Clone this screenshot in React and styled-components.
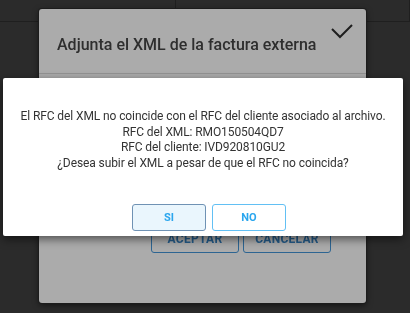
import React from 'react'
import styled, { createGlobalStyle } from 'styled-components'

const GlobalStyle = createGlobalStyle`
  html, body {
    margin: 0;
    padding: 0;
    background: #2b2b2b;
    font-family: Roboto, "Noto Sans", Arial, sans-serif;
  }
`

const Screen = styled.div`
  width: 410px;
  height: 313px;
  background: #2b2b2b;
  overflow: hidden;
`

const HeaderRow = styled.div`
  display: flex;
  height: 21px;
  border-bottom: 1px solid #1f1f1f;
`

const HeaderCell = styled.div`
  width: ${p => p.w}px;
  border-right: 1px solid #1f1f1f;
`

const Panel = styled.div`
  position: fixed;
  left: 39px;
  top: 9px;
  width: 327px;
  height: 294px;
  background: #ababab;
  border-radius: 3px;
  box-shadow: 0 0 0 1px #1c1c1c, 0 2px 6px rgba(0, 0, 0, 0.6);
  display: flex;
  flex-direction: column;
`

const PanelHeader = styled.div`
  height: 64px;
  border-bottom: 1px solid #939393;
  display: flex;
  align-items: flex-end;
  justify-content: space-between;
  padding: 0 12px 0 18px;
  position: relative;
`

const Title = styled.h2`
  margin: 0 0 19px;
  font-size: 16px;
  font-weight: 500;
  color: #2e2e2e;
`

const CheckBtn = styled.div`
  position: absolute;
  right: 12px;
  top: 14px;
  width: 24px;
  height: 20px;
`

const PanelActions = styled.div`
  display: flex;
  gap: 4px;
  margin: 151px 35px 0 112px;
`

const OutlineBtn = styled.button`
  width: 88px;
  height: 28px;
  border: 1px solid #2d6592;
  border-radius: 3px;
  background: transparent;
  color: #245a87;
  font-family: Roboto, Arial, sans-serif;
  font-size: 12px;
  font-weight: 700;
  letter-spacing: 0.3px;
  padding: 0;
`

const Dialog = styled.div`
  position: fixed;
  left: 3px;
  top: 78px;
  width: 400px;
  height: 158px;
  background: #ffffff;
  border-radius: 2px;
  box-shadow: 0 3px 10px rgba(0, 0, 0, 0.55);
  display: flex;
  flex-direction: column;
  align-items: center;
  box-sizing: border-box;
  padding-top: 31px;
`

const Message = styled.p`
  margin: 0;
  text-align: center;
  font-size: 12px;
  letter-spacing: -0.1px;
  line-height: 15.5px;
  color: #333;
`

const DialogActions = styled.div`
  display: flex;
  gap: 6px;
  margin-top: 33px;
  padding-left: 12px;
`

const DialogBtn = styled.button`
  width: 74px;
  height: 27px;
  box-sizing: border-box;
  border: 1px solid ${p => (p.focused ? '#6f92b4' : '#62c0f4')};
  border-radius: 3px;
  background: ${p => (p.focused ? '#eaf6fd' : '#ffffff')};
  color: #2aa6ee;
  font-family: Roboto, Arial, sans-serif;
  font-size: 11px;
  font-weight: 700;
  padding: 0;
`

export default function App() {
  return (
    <Screen>
      <GlobalStyle />
      <HeaderRow>
        <HeaderCell w={175} />
        <HeaderCell w={234} />
      </HeaderRow>

      <Panel>
        <PanelHeader>
          <Title>Adjunta el XML de la factura externa</Title>
          <CheckBtn>
            <svg width="24" height="20" viewBox="0 0 24 20">
              <path d="M2 6 L10 14 L22 2" fill="none" stroke="#1e1e1e" strokeWidth="2" />
            </svg>
          </CheckBtn>
        </PanelHeader>
        <PanelActions>
          <OutlineBtn>ACEPTAR</OutlineBtn>
          <OutlineBtn>CANCELAR</OutlineBtn>
        </PanelActions>
      </Panel>

      <Dialog>
        <Message>
          El RFC del XML no coincide con el RFC del cliente asociado al archivo.
          <br />
          RFC del XML: RMO150504QD7
          <br />
          RFC del cliente: IVD920810GU2
          <br />
          ¿Desea subir el XML a pesar de que el RFC no coincida?
        </Message>
        <DialogActions>
          <DialogBtn focused>SI</DialogBtn>
          <DialogBtn>NO</DialogBtn>
        </DialogActions>
      </Dialog>
    </Screen>
  )
}
